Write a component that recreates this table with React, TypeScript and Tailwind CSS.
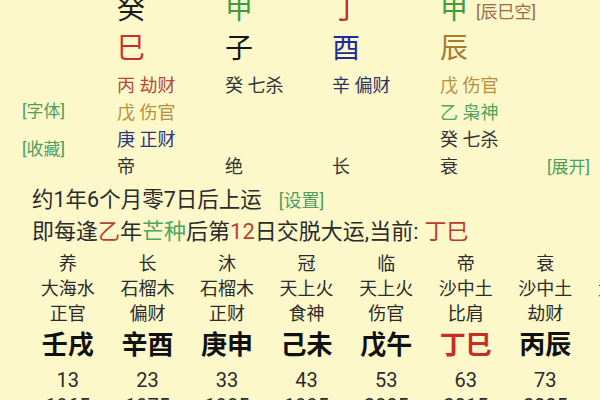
import React from 'react';

const pillars = [
  {
    stem: '癸', stemColor: 'text-[#1c1c1c]',
    branch: '巳', branchColor: 'text-[#c9302a]',
    hidden: [
      { text: '丙 劫财', color: 'text-[#b4493a]' },
      { text: '戊 伤官', color: 'text-[#b8903c]' },
      { text: '庚 正财', color: 'text-[#2c357a]' },
    ],
    stage: '帝',
    width: 'w-[108px]',
  },
  {
    stem: '甲', stemColor: 'text-[#3c9a45]',
    branch: '子', branchColor: 'text-[#151515]',
    hidden: [{ text: '癸 七杀', color: 'text-[#333333]' }],
    stage: '绝',
    width: 'w-[107px]',
  },
  {
    stem: '丁', stemColor: 'text-[#c0302a]',
    branch: '酉', branchColor: 'text-[#1d2a98]',
    hidden: [{ text: '辛 偏财', color: 'text-[#2e3566]' }],
    stage: '长',
    width: 'w-[108px]',
  },
  {
    stem: '甲', stemColor: 'text-[#3c9a45]',
    branch: '辰', branchColor: 'text-[#a97a34]',
    hidden: [
      { text: '戊 伤官', color: 'text-[#b8903c]' },
      { text: '乙 枭神', color: 'text-[#4fa562]' },
      { text: '癸 七杀', color: 'text-[#333333]' },
    ],
    stage: '衰',
    width: 'w-[107px]',
  },
];

const dayun = [
  { stage: '养', nayin: '大海水', god: '正官', gz: '壬戌', age: 13, year: 1965 },
  { stage: '长', nayin: '石榴木', god: '偏财', gz: '辛酉', age: 23, year: 1975 },
  { stage: '沐', nayin: '石榴木', god: '正财', gz: '庚申', age: 33, year: 1985 },
  { stage: '冠', nayin: '天上火', god: '食神', gz: '己未', age: 43, year: 1995 },
  { stage: '临', nayin: '天上火', god: '伤官', gz: '戊午', age: 53, year: 2005 },
  { stage: '帝', nayin: '沙中土', god: '比肩', gz: '丁巳', age: 63, year: 2015, current: true },
  { stage: '衰', nayin: '沙中土', god: '劫财', gz: '丙辰', age: 73, year: 2025 },
  { stage: '病', nayin: '大溪水', god: '偏印', gz: '乙卯', age: 83, year: 2035 },
];

export default function App() {
  return (
    <div className="w-[600px] h-[400px] overflow-hidden bg-[#fcf8ca] text-[#2b2b2b] font-['Roboto','Noto_Sans_CJK_SC',sans-serif]">
      {/* Pillars */}
      <div className="flex -mt-[9px]">
        <div className="w-[117px] flex flex-col pl-[22px] pt-[108px] text-[17px] text-[#4f9d5f]">
          <span className="h-[24px] leading-[24px]">[字体]</span>
          <span className="h-[24px] leading-[24px] mt-[14px]">[收藏]</span>
        </div>
        {pillars.map((p, i) => (
          <div key={i} className={`${p.width} flex flex-col`}>
            <div className="h-[38px] flex items-center">
              <span className={`text-[28px] leading-none ${p.stemColor}`}>{p.stem}</span>
              {i === 3 && (
                <span className="ml-[8px] mt-[4px] text-[17px] leading-none text-[#9a6d4c]">[辰巳空]</span>
              )}
            </div>
            <div className={`h-[40px] flex items-center text-[28px] leading-none ${p.branchColor}`}>{p.branch}</div>
            <div className="h-[83px] flex flex-col pt-[3px]">
              {p.hidden.map((h, j) => (
                <div key={j} className={`h-[27px] leading-[27px] text-[18px] ${h.color}`}>{h.text}</div>
              ))}
            </div>
            <div className="h-[28px] leading-[28px] mt-[1px] text-[18px] text-[#333333]">{p.stage}</div>
          </div>
        ))}
        <div className="flex flex-col justify-end">
          <span className="h-[28px] leading-[28px] text-[17px] text-[#4f9d5f]">[展开]</span>
        </div>
      </div>

      {/* Start of luck */}
      <div className="pl-[32px] mt-[4px] h-[30px] flex items-center text-[21.5px] text-[#2b2b2b]">
        <span>约1年6个月零7日后上运</span>
        <span className="ml-[17px] text-[18px] text-[#4f9d5f]">[设置]</span>
      </div>
      <div className="pl-[32px] h-[32px] flex items-center text-[22px] text-[#2b2b2b]">
        <span>即每逢</span>
        <span className="text-[#b9412f]">乙</span>
        <span>年</span>
        <span className="text-[#4fa562]">芒种</span>
        <span>后第</span>
        <span className="text-[#b9412f]">12</span>
        <span>日交脱大运,当前:</span>
        <span className="ml-[6px] text-[22px] text-[#c0392b]">丁巳</span>
      </div>

      {/* Da yun table */}
      <div className="grid grid-cols-[repeat(8,79.6px)] pl-[28px] mt-[4px] text-[#2b2b2b]">
        {dayun.map((d) => (
          <div key={d.gz} className="flex flex-col items-center whitespace-nowrap">
            <span className="h-[25px] leading-[25px] text-[18px]">{d.stage}</span>
            <span className="h-[25px] leading-[25px] text-[18px]">{d.nayin}</span>
            <span className="h-[26px] leading-[26px] text-[18px]">{d.god}</span>
            <span className={`h-[36px] leading-[36px] text-[26px] font-semibold ${d.current ? 'text-[#c62d25]' : 'text-[#111111]'}`}>{d.gz}</span>
            <span className="h-[30px] leading-[34px] text-[20px]">{d.age}</span>
            <span className="h-[26px] leading-[26px] text-[20px]">{d.year}</span>
          </div>
        ))}
      </div>
    </div>
  );
}
